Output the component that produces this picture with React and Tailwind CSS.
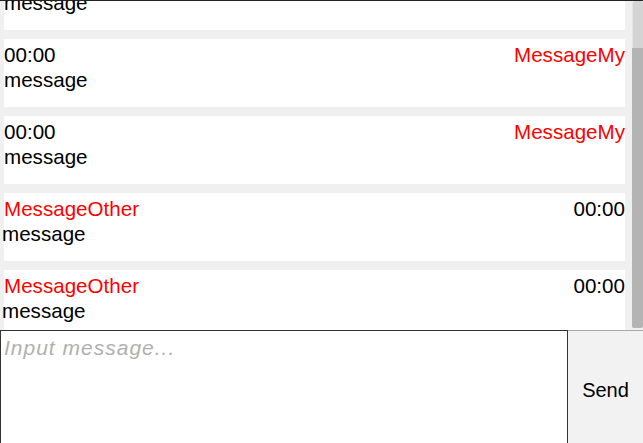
import React from "react";

const messages = [
  { type: "my" },
  { type: "my" },
  { type: "my" },
  { type: "other" },
  { type: "other" },
];

function Card({ type }) {
  if (type === "my") {
    return (
      <div className="h-[68px] shrink-0 bg-white pt-[3px] text-[20.6px] leading-[25px]">
        <div className="flex justify-between">
          <span>00:00</span>
          <span className="text-[#ff0000]">MessageMy</span>
        </div>
        <div>message</div>
      </div>
    );
  }
  return (
    <div className="h-[68px] shrink-0 bg-white pt-[3px] text-[20.6px] leading-[25px]">
      <div className="flex justify-between">
        <span className="text-[#ff0000]">MessageOther</span>
        <span>00:00</span>
      </div>
      <div className="-ml-[2px]">message</div>
    </div>
  );
}

export default function App() {
  return (
    <div className="flex h-[443px] w-[643px] flex-col overflow-hidden bg-white font-['Liberation_Sans',Arial,sans-serif] text-[20px] text-black">
      <div className="flex h-[330px] shrink-0 border-t border-[#222] bg-[#f0f0f0]">
        <div className="flex-1 overflow-hidden pl-[4px] pr-[7px]">
          <div className="-mt-[39px] flex flex-col gap-[9px]">
            {messages.map((m, i) => (
              <Card key={i} type={m.type} />
            ))}
          </div>
        </div>
        <div className="flex w-[11px] flex-col pb-[2px]">
          <div className="h-[47px] rounded-t-[3px] border-l border-[#e4e4e4] bg-[#d4d4d4]" />
          <div className="flex-1 rounded-b-[2px] bg-[#b4b4b4]" />
        </div>
      </div>
      <div className="flex h-[118px] shrink-0">
        <textarea
          placeholder="Input message..."
          className="h-full w-[568px] resize-none border border-[#333] bg-white px-[3px] pt-[5px] text-[21px] leading-[23px] tracking-[1px] outline-none placeholder:italic placeholder:text-[#b0b0b0]"
        />
        <button className="flex-1 border-t border-[#aaa] bg-[#f2f2f2] text-black">
          Send
        </button>
      </div>
    </div>
  );
}
